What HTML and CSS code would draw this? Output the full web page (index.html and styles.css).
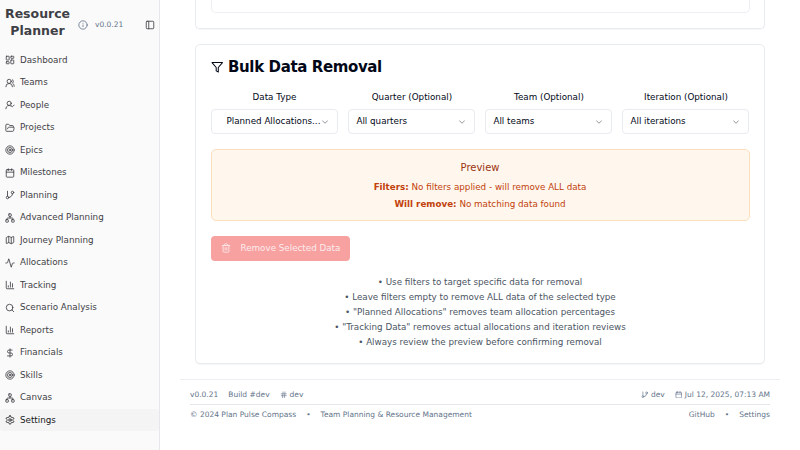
FILE: index.html
```html
<!DOCTYPE html>
<html lang="en">
<head>
<meta charset="utf-8">
<title>Resource Planner</title>
<link rel="stylesheet" href="styles.css">
</head>
<body>
<svg class="defs" width="0" height="0">
  <symbol id="info" viewBox="0 0 24 24"><circle cx="12" cy="12" r="10"/><path d="M12 16v-4M12 8h.01"/></symbol>
  <symbol id="panel" viewBox="0 0 24 24"><rect x="3" y="3" width="18" height="18" rx="2"/><path d="M9 3v18"/></symbol>
  <symbol id="dashboard" viewBox="0 0 24 24"><rect x="3" y="3" width="7" height="9" rx="1"/><rect x="14" y="3" width="7" height="5" rx="1"/><rect x="14" y="12" width="7" height="9" rx="1"/><rect x="3" y="16" width="7" height="5" rx="1"/></symbol>
  <symbol id="users" viewBox="0 0 24 24"><path d="M18 21a8 8 0 0 0-16 0"/><circle cx="10" cy="8" r="5"/><path d="M22 20c0-3.37-2-6.5-4-8a5 5 0 0 0-.45-8.3"/></symbol>
  <symbol id="person" viewBox="0 0 24 24"><path d="M2 21a8 8 0 0 1 13.292-6"/><circle cx="10" cy="8" r="5"/><path d="m16 14 2 2 4-4"/></symbol>
  <symbol id="folder" viewBox="0 0 24 24"><path d="m6 14 1.5-2.9A2 2 0 0 1 9.24 10H20a2 2 0 0 1 1.94 2.5l-1.54 6a2 2 0 0 1-1.95 1.5H4a2 2 0 0 1-2-2V5a2 2 0 0 1 2-2h3.9a2 2 0 0 1 1.69.9l.81 1.2a2 2 0 0 0 1.67.9H18a2 2 0 0 1 2 2v2"/></symbol>
  <symbol id="target" viewBox="0 0 24 24"><circle cx="12" cy="12" r="10"/><circle cx="12" cy="12" r="6"/><circle cx="12" cy="12" r="2"/></symbol>
  <symbol id="calendar" viewBox="0 0 24 24"><path d="M8 2v4M16 2v4M3 10h18"/><rect x="3" y="4" width="18" height="18" rx="2"/></symbol>
  <symbol id="branch" viewBox="0 0 24 24"><path d="M6 3v12"/><circle cx="18" cy="6" r="3"/><circle cx="6" cy="18" r="3"/><path d="M18 9a9 9 0 0 1-9 9"/></symbol>
  <symbol id="network" viewBox="0 0 24 24"><rect x="16" y="16" width="6" height="6" rx="1"/><rect x="2" y="16" width="6" height="6" rx="1"/><rect x="9" y="2" width="6" height="6" rx="1"/><path d="M5 16v-3a1 1 0 0 1 1-1h12a1 1 0 0 1 1 1v3M12 12V8"/></symbol>
  <symbol id="map" viewBox="0 0 24 24"><path d="M14.1 5.55a2 2 0 0 0 1.8 0l3.65-1.83A1 1 0 0 1 21 4.62v12.76a1 1 0 0 1-.55.9l-4.55 2.27a2 2 0 0 1-1.8 0l-4.2-2.1a2 2 0 0 0-1.8 0l-3.65 1.83A1 1 0 0 1 3 19.38V6.62a1 1 0 0 1 .55-.9L8.1 3.45a2 2 0 0 1 1.8 0zM15 5.76v15M9 3.24v15"/></symbol>
  <symbol id="activity" viewBox="0 0 24 24"><path d="M22 12h-2.48a2 2 0 0 0-1.93 1.46l-2.35 8.36a.25.25 0 0 1-.48 0L9.24 2.18a.25.25 0 0 0-.48 0l-2.35 8.36A2 2 0 0 1 4.49 12H2"/></symbol>
  <symbol id="chart" viewBox="0 0 24 24"><path d="M3 3v16a2 2 0 0 0 2 2h16M18 17V9M13 17V5M8 17v-3"/></symbol>
  <symbol id="search" viewBox="0 0 24 24"><circle cx="11" cy="11" r="8"/><path d="m21 21-4.3-4.3"/></symbol>
  <symbol id="dollar" viewBox="0 0 24 24"><path d="M12 2v20M17 5H9.5a3.5 3.5 0 0 0 0 7h5a3.5 3.5 0 0 1 0 7H6"/></symbol>
  <symbol id="settings" viewBox="0 0 24 24"><path d="M12.22 2h-.44a2 2 0 0 0-2 2v.18a2 2 0 0 1-1 1.73l-.43.25a2 2 0 0 1-2 0l-.15-.08a2 2 0 0 0-2.73.73l-.22.38a2 2 0 0 0 .73 2.73l.15.1a2 2 0 0 1 1 1.72v.51a2 2 0 0 1-1 1.74l-.15.09a2 2 0 0 0-.73 2.73l.22.38a2 2 0 0 0 2.73.73l.15-.08a2 2 0 0 1 2 0l.43.25a2 2 0 0 1 1 1.73V20a2 2 0 0 0 2 2h.44a2 2 0 0 0 2-2v-.18a2 2 0 0 1 1-1.73l.43-.25a2 2 0 0 1 2 0l.15.08a2 2 0 0 0 2.73-.73l.22-.39a2 2 0 0 0-.73-2.73l-.15-.08a2 2 0 0 1-1-1.74v-.5a2 2 0 0 1 1-1.74l.15-.09a2 2 0 0 0 .73-2.73l-.22-.38a2 2 0 0 0-2.73-.73l-.15.08a2 2 0 0 1-2 0l-.43-.25a2 2 0 0 1-1-1.73V4a2 2 0 0 0-2-2z"/><circle cx="12" cy="12" r="3"/></symbol>
  <symbol id="filter" viewBox="0 0 24 24"><path d="M22 3H2l8 9.46V19l4 2v-8.54z"/></symbol>
  <symbol id="chevron" viewBox="0 0 24 24"><path d="m6 9 6 6 6-6"/></symbol>
  <symbol id="trash" viewBox="0 0 24 24"><path d="M3 6h18M19 6v14a2 2 0 0 1-2 2H7a2 2 0 0 1-2-2V6M8 6V4a2 2 0 0 1 2-2h4a2 2 0 0 1 2 2v2M10 11v6M14 11v6"/></symbol>
  <symbol id="hash" viewBox="0 0 24 24"><path d="M4 9h16M4 15h16M10 3 8 21M16 3l-2 18"/></symbol>
</svg>
<div class="app">
  <aside class="sidebar">
    <header class="brand">
      <h1 class="brand-name">Resource Planner</h1>
      <div class="version"><svg class="icon"><use href="#info"/></svg><span>v0.0.21</span></div>
      <button class="toggle" aria-label="Toggle sidebar"><svg class="icon"><use href="#panel"/></svg></button>
    </header>
    <nav class="nav">
      <a class="nav-item"><svg class="icon"><use href="#dashboard"/></svg>Dashboard</a>
      <a class="nav-item"><svg class="icon"><use href="#users"/></svg>Teams</a>
      <a class="nav-item"><svg class="icon"><use href="#person"/></svg>People</a>
      <a class="nav-item"><svg class="icon"><use href="#folder"/></svg>Projects</a>
      <a class="nav-item"><svg class="icon"><use href="#target"/></svg>Epics</a>
      <a class="nav-item"><svg class="icon"><use href="#calendar"/></svg>Milestones</a>
      <a class="nav-item"><svg class="icon"><use href="#branch"/></svg>Planning</a>
      <a class="nav-item"><svg class="icon"><use href="#network"/></svg>Advanced Planning</a>
      <a class="nav-item"><svg class="icon"><use href="#map"/></svg>Journey Planning</a>
      <a class="nav-item"><svg class="icon"><use href="#activity"/></svg>Allocations</a>
      <a class="nav-item"><svg class="icon"><use href="#chart"/></svg>Tracking</a>
      <a class="nav-item"><svg class="icon"><use href="#search"/></svg>Scenario Analysis</a>
      <a class="nav-item"><svg class="icon"><use href="#chart"/></svg>Reports</a>
      <a class="nav-item"><svg class="icon"><use href="#dollar"/></svg>Financials</a>
      <a class="nav-item"><svg class="icon"><use href="#target"/></svg>Skills</a>
      <a class="nav-item"><svg class="icon"><use href="#network"/></svg>Canvas</a>
      <a class="nav-item active"><svg class="icon"><use href="#settings"/></svg>Settings</a>
    </nav>
  </aside>
  <main class="main">
    <section class="card card-tail"><div class="panel-tail"></div></section>
    <section class="card removal">
      <h2 class="card-title"><svg class="icon"><use href="#filter"/></svg>Bulk Data Removal</h2>
      <div class="filters">
        <div class="field"><label>Data Type</label><button class="select select-centered"><span>Planned Allocations...</span><svg class="icon"><use href="#chevron"/></svg></button></div>
        <div class="field"><label>Quarter (Optional)</label><button class="select"><span>All quarters</span><svg class="icon"><use href="#chevron"/></svg></button></div>
        <div class="field"><label>Team (Optional)</label><button class="select"><span>All teams</span><svg class="icon"><use href="#chevron"/></svg></button></div>
        <div class="field"><label>Iteration (Optional)</label><button class="select"><span>All iterations</span><svg class="icon"><use href="#chevron"/></svg></button></div>
      </div>
      <div class="preview">
        <h3>Preview</h3>
        <p><strong>Filters:</strong> No filters applied - will remove ALL data</p>
        <p><strong>Will remove:</strong> No matching data found</p>
      </div>
      <button class="remove"><svg class="icon"><use href="#trash"/></svg>Remove Selected Data</button>
      <div class="notes">
        <p>• Use filters to target specific data for removal</p>
        <p>• Leave filters empty to remove ALL data of the selected type</p>
        <p>• "Planned Allocations" removes team allocation percentages</p>
        <p>• "Tracking Data" removes actual allocations and iteration reviews</p>
        <p>• Always review the preview before confirming removal</p>
      </div>
    </section>
    <footer class="footer">
      <div class="footer-row">
        <div class="group"><span>v0.0.21</span><span>Build #dev</span><span class="meta"><svg class="icon"><use href="#hash"/></svg>dev</span></div>
        <div class="group"><span class="meta"><svg class="icon"><use href="#branch"/></svg>dev</span><span class="meta"><svg class="icon"><use href="#calendar"/></svg>Jul 12, 2025, 07:13 AM</span></div>
      </div>
      <div class="footer-row footer-legal">
        <div class="group"><span>© 2024 Plan Pulse Compass</span><span>•</span><span>Team Planning &amp; Resource Management</span></div>
        <div class="group"><span>GitHub</span><span>•</span><span>Settings</span></div>
      </div>
    </footer>
  </main>
</div>
</body>
</html>
```
FILE: styles.css
```css
* { box-sizing: border-box; }
html { font-size: 10px; }
body {
  margin: 0;
  height: 450px;
  overflow: hidden;
  background: #fff;
  color: #020817;
  font-family: "DejaVu Sans", sans-serif;
  font-size: 0.875rem;
  line-height: 1.25rem;
}
h1, h2, h3, p { margin: 0; }
button { font: inherit; color: inherit; margin: 0; }
.defs { position: absolute; }
.icon {
  width: 1rem;
  height: 1rem;
  flex: none;
  fill: none;
  stroke: currentColor;
  stroke-width: 2;
  stroke-linecap: round;
  stroke-linejoin: round;
}
.app { display: flex; height: 450px; }

.sidebar {
  width: 160px;
  flex: none;
  background: #fafafa;
  border-right: 1px solid #e5e7eb;
  color: #3f3f46;
}
.brand {
  display: flex;
  align-items: center;
  height: 48.75px;
  padding: 5px 4px 4px 5px;
}
.brand-name {
  width: 65px;
  margin-bottom: 6px;
  font-size: 1.25rem;
  line-height: 17px;
  font-weight: 700;
  text-align: center;
}
.version {
  display: flex;
  align-items: center;
  gap: 7.5px;
  margin-left: 7.5px;
  font-size: 0.75rem;
  color: #64748b;
}
.toggle {
  display: flex;
  margin-left: auto;
  padding: 0;
  border: 0;
  background: none;
}
.nav-item {
  display: flex;
  align-items: center;
  gap: 5px;
  height: 22.5px;
  padding: 0 5px;
}
.nav-item.active { background: #f4f4f5; color: #18181b; border-radius: 4px; }

.main { flex: 1; min-width: 0; padding: 0 20px; }
.card {
  margin: 0 15px;
  border: 1px solid #e8ebf0;
  border-radius: 5px;
  background: #fff;
  box-shadow: 0 1px 1px rgba(0, 0, 0, 0.04);
}
.card-tail { height: 28.5px; padding: 0 14.5px; border-top: 0; border-radius: 0 0 5px 5px; }
.panel-tail { height: 12.5px; border: 1px solid #eceef2; border-top: 0; border-radius: 0 0 5px 5px; }
.removal { height: 320px; margin-top: 15px; padding: 15px 14.5px 0; }
.card-title {
  display: flex;
  align-items: center;
  gap: 5px;
  height: 15px;
  font-size: 1.5rem;
  line-height: 1;
  font-weight: 600;
  letter-spacing: -0.025em;
}
.card-title .icon { width: 12.5px; height: 12.5px; }
.filters {
  display: grid;
  grid-template-columns: repeat(4, 1fr);
  gap: 10px;
  margin-top: 14px;
}
.field label { display: block; height: 20px; line-height: 16px; text-align: center; }
.select {
  display: flex;
  align-items: center;
  justify-content: space-between;
  width: 100%;
  height: 25px;
  padding: 1px 7px 0;
  border: 1px solid #e8ebf0;
  border-radius: 4px;
  background: #fff;
  white-space: nowrap;
}
.select .icon { opacity: 0.5; }
.select-centered { padding-left: 15px; }
.preview {
  height: 72px;
  margin-top: 15px;
  padding: 10px;
  border: 1px solid #fbdfbd;
  border-radius: 5px;
  background: #fff7ed;
  color: #c2410c;
  text-align: center;
}
.preview h3 {
  margin-bottom: 6px;
  font-size: 1rem;
  line-height: 15px;
  font-weight: 500;
  color: #9a3412;
}
.preview p + p { margin-top: 5px; }
.remove {
  display: flex;
  align-items: center;
  gap: 10px;
  height: 25px;
  margin-top: 15px;
  padding: 0 10px;
  border: 0;
  border-radius: 4px;
  background: #f7a1a1;
  color: #fcecec;
}
.notes { margin-top: 15px; color: #4b5563; text-align: center; }
.notes p { height: 15px; line-height: 12.5px; }

.footer {
  margin-top: 15px;
  border-top: 1px solid #eceef2;
  padding: 7px 10px;
  font-size: 0.75rem;
  line-height: 10px;
  color: #64748b;
}
.footer-row { display: flex; justify-content: space-between; height: 17px; align-items: center; }
.footer-row:first-child { padding-bottom: 1px; }
.footer-legal { border-top: 1px solid #e5e7eb; height: 21px; }
.group { display: flex; gap: 10px; }
.meta { display: flex; align-items: center; gap: 2.5px; }
.meta .icon { width: 7.5px; height: 7.5px; }
```
